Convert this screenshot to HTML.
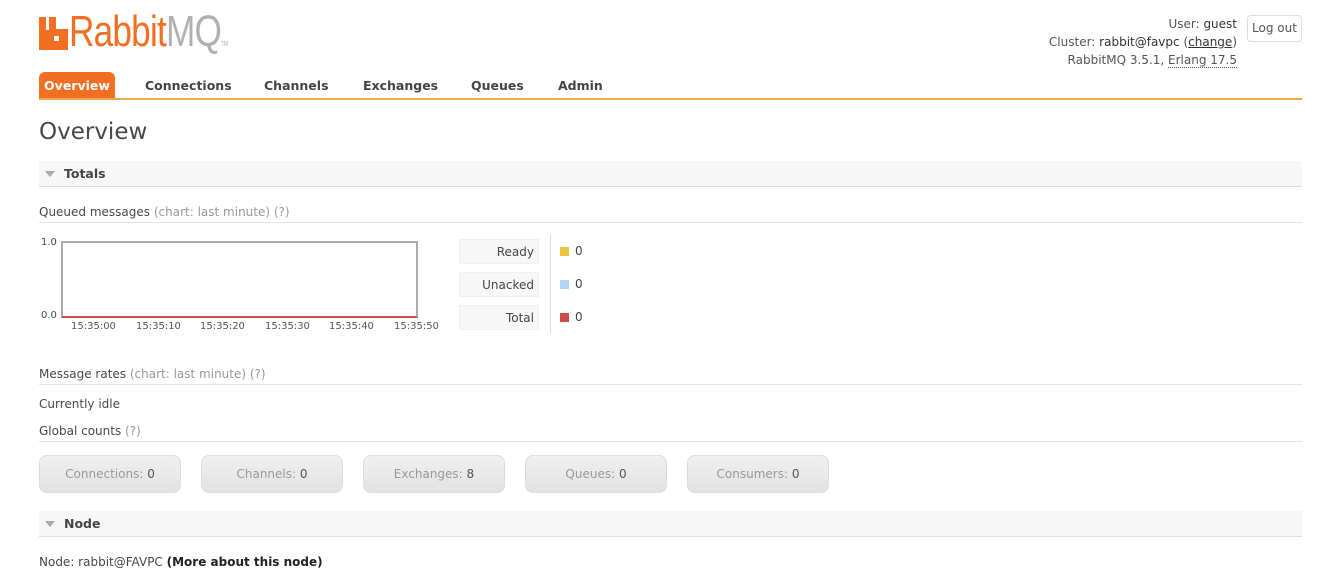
<!DOCTYPE html>
<html><head><meta charset="utf-8"><style>
*{margin:0;padding:0;box-sizing:border-box}
body{width:1326px;height:581px;background:#fff;font-family:"DejaVu Sans","Liberation Sans",sans-serif;font-size:12px;color:#484848;position:relative;overflow:hidden}
.a{position:absolute;white-space:nowrap}
.g{color:#999}
.tab{position:absolute;top:78px;font-weight:bold;font-size:12.5px;color:#444}
.sec{position:absolute;left:39px;width:1263px;height:26px;background:#f7f7f7;border-bottom:1px solid #ddd}
.sec span{position:absolute;left:25px;top:5px;font-weight:bold;font-size:12.5px;color:#444}
.sec i{position:absolute;left:6px;top:10px;border-left:5px solid transparent;border-right:5px solid transparent;border-top:6px solid #aaa}
.hr{position:absolute;left:39px;width:1263px;border-top:1px solid #e4e4e4}
.lg{position:absolute;left:459px;width:80px;height:25px;background:#f7f7f7;border:1px solid #f0f0f0;text-align:right;padding:5px 4px 0 0;color:#444}
.sw{position:absolute;left:560px;width:9px;height:9px}
.v{position:absolute;left:575px;color:#444}
.btn{position:absolute;top:455px;width:142px;height:38px;border:1px solid #ddd;border-radius:8px;background:linear-gradient(#f0f0f0,#e2e2e2);text-align:center;line-height:37px;color:#999}
.btn b{font-weight:normal;color:#555}
.tk{position:absolute;top:321px;font-size:10px;color:#555}
</style></head><body>
<svg class="a" style="left:39px;top:17px" width="29" height="33" viewBox="0 0 29 33"><path d="M0 0H7V13H10V0H17V12H29V33H0Z" fill="#f26e22"/><rect x="15" y="19" width="5" height="5" fill="#fff"/></svg>
<div class="a" style="left:69px;top:10px;font-family:'Liberation Sans',sans-serif;font-size:44px;letter-spacing:-1px;line-height:44px;transform:scaleX(0.8);transform-origin:0 0"><span style="color:#f26e22">Rabbit</span><span style="color:#b0b0b0">MQ</span><span style="font-size:7px;color:#bbb">TM</span></div>
<div class="a" style="right:89px;top:15px;text-align:right;line-height:18px;color:#555">User: <span style="color:#333">guest</span><br>Cluster: <span style="color:#333">rabbit@favpc</span> (<u style="color:#333">change</u>)<br>RabbitMQ 3.5.1, <span style="border-bottom:1px dotted #555">Erlang 17.5</span></div>
<div class="a" style="left:1247px;top:15px;width:55px;height:27px;border:1px solid #ddd;border-radius:4px;text-align:center;line-height:25px;color:#555">Log out</div>
<div class="a" style="left:39px;top:72px;width:76px;height:28px;background:#f26e22;border-radius:6px 6px 0 0;color:#fff;font-weight:bold;font-size:12.5px;text-align:center;line-height:27px">Overview</div>
<div class="tab" style="left:145px">Connections</div>
<div class="tab" style="left:264px">Channels</div>
<div class="tab" style="left:363px">Exchanges</div>
<div class="tab" style="left:471px">Queues</div>
<div class="tab" style="left:558px">Admin</div>
<div class="a" style="left:39px;top:98px;width:1263px;height:2px;background:#e8a94a"></div>
<div class="a" style="left:39px;top:119px;font-size:23px;color:#484848">Overview</div>
<div class="sec" style="top:161px"><i></i><span>Totals</span></div>
<div class="a" style="left:39px;top:205px">Queued messages <span class="g">(chart: last minute) (?)</span></div>
<div class="hr" style="top:222px"></div>
<div class="a" style="left:41px;top:237px;font-size:10px">1.0</div>
<div class="a" style="left:41px;top:310px;font-size:10px">0.0</div>
<div class="a" style="left:61px;top:241px;width:357px;height:77px;border:2px solid #aaa;border-bottom:2px solid #c05050"></div>
<div class="tk" style="left:71px">15:35:00</div><div class="tk" style="left:136px">15:35:10</div><div class="tk" style="left:200px">15:35:20</div><div class="tk" style="left:265px">15:35:30</div><div class="tk" style="left:329px">15:35:40</div><div class="tk" style="left:394px">15:35:50</div>
<div class="lg" style="top:239px">Ready</div>
<div class="lg" style="top:272px">Unacked</div>
<div class="lg" style="top:305px">Total</div>
<div class="a" style="left:550px;top:235px;width:1px;height:98px;background:#ddd"></div>
<div class="sw" style="top:247px;background:#edc240"></div><div class="v" style="top:244px">0</div>
<div class="sw" style="top:280px;background:#afd8f8"></div><div class="v" style="top:277px">0</div>
<div class="sw" style="top:313px;background:#cb4b4b"></div><div class="v" style="top:310px">0</div>
<div class="a" style="left:39px;top:367px">Message rates <span class="g">(chart: last minute) (?)</span></div>
<div class="hr" style="top:384px"></div>
<div class="a" style="left:39px;top:397px">Currently idle</div>
<div class="a" style="left:39px;top:424px">Global counts <span class="g">(?)</span></div>
<div class="hr" style="top:441px"></div>
<div class="btn" style="left:39px">Connections: <b>0</b></div>
<div class="btn" style="left:201px">Channels: <b>0</b></div>
<div class="btn" style="left:363px">Exchanges: <b>8</b></div>
<div class="btn" style="left:525px">Queues: <b>0</b></div>
<div class="btn" style="left:687px">Consumers: <b>0</b></div>
<div class="sec" style="top:511px"><i></i><span>Node</span></div>
<div class="a" style="left:39px;top:555px">Node: rabbit@FAVPC <b style="color:#222">(More about this node)</b></div>
</body></html>
